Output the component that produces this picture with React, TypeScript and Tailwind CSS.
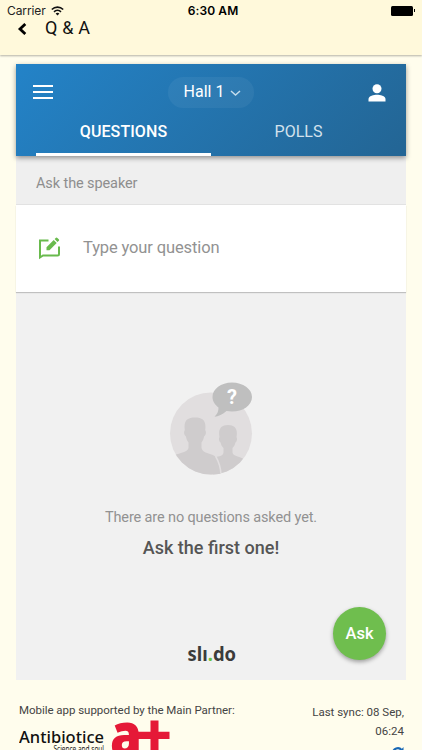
import { useState } from 'react';

const tabs = ['QUESTIONS', 'POLLS'];

const StatusBar = () => (
  <div className="flex h-[21px] items-center px-[7px] font-['Inter',sans-serif] text-[12px] leading-none text-black">
    <div className="flex flex-1 items-center gap-[5px] pt-px text-[#222]">
      <span className="tracking-[-0.1px]">Carrier</span>
      <svg width="13" height="10" viewBox="0 0 13 10" fill="none" stroke="#111" strokeWidth="1.6">
        <path d="M0.8 3.5C4 0.3 9 0.3 12.2 3.5" />
        <path d="M3 5.8C5 3.9 8 3.9 10 5.8" />
        <path d="M6.5 9.4 4.6 7.5Q6.5 6 8.4 7.5Z" fill="#111" stroke="none" />
      </svg>
    </div>
    <span className="mr-[-4px] pt-px font-semibold tracking-[0.1px]">6:30 AM</span>
    <div className="flex flex-1 items-center justify-end gap-px">
      <div className="h-[10px] w-[22px] rounded-[1.5px] bg-black" />
      <div className="h-[3px] w-px bg-black" />
    </div>
  </div>
);

const EmptyIcon = () => (
  <svg width="84" height="94" viewBox="0 0 84 94">
    <defs>
      <clipPath id="disc">
        <circle cx="42" cy="51.500" r="41" />
      </clipPath>
    </defs>
    <circle cx="42" cy="51.500" r="41" fill="#e1dedf" />
    <g clipPath="url(#disc)" fill="#cfcccd">
      <path d="M44 94V76C48 74 54 75 54.500 70.500V66C52.800 64.500 52 62.500 51.600 60.500C50 59.500 49.500 56.500 50.500 55C49 47 52 43 59 43C66 43 69 47 67.500 55C68.500 56.500 68 59.500 66.400 60.500C66 62.500 65.200 64.500 63.500 66V70.500C64 75 72 74 78 79V94Z" />
      <path d="M-1 94V77C7 70 18 72 19.500 66V60.500C18 58.500 17.200 56.500 17 54.500C15 53 14.500 50 15.800 48C14.500 39 18 35.500 26 35.500C34 35.500 37.500 39 36.200 48C37.500 50 37 53 35 54.500C34.800 56.500 34 58.500 32.500 60.500V66C34 72 43 71 47 75C50 81 51.500 87 51.500 94Z" />
      <path d="M46.500 74C50 80 52 86 52 94" fill="none" stroke="#e1dedf" strokeWidth="1.500" />
    </g>
    <path d="M63 0.500C74 0.500 83 7 83 15C83 23.500 74 29.500 63 29.500C61 29.500 59 29.300 57.500 29C54 32 49 34.500 45.500 34.700C48.500 32 49.500 29 49.500 25.500C46 23 43.500 19 43.500 15C43.500 7 52 0.500 63 0.500Z" fill="#bfbfbf" />
    <text x="63" y="21.500" textAnchor="middle" fill="#fff" fontFamily="Roboto, sans-serif" fontWeight="700" fontSize="20">?</text>
  </svg>
);

const PartnerLogo = () => (
  <svg width="152" height="34" viewBox="0 0 152 34" className="block">
    <text x="0" y="24.500" textLength="85" lengthAdjust="spacingAndGlyphs" fontFamily="Noto Sans, sans-serif" fontWeight="500" fontSize="17" fill="#111">Antibiotice</text>
    <text x="34.500" y="33.500" textLength="50.500" lengthAdjust="spacingAndGlyphs" fontFamily="Noto Sans, sans-serif" fontSize="8.500" fill="#222">Science and soul</text>
    <text x="91" y="37.500" textLength="32" lengthAdjust="spacingAndGlyphs" fontFamily="Open Sans, sans-serif" fontWeight="800" fontSize="61" fill="#e51937">a</text>
    <path d="M112 13.700H150.500V21H112ZM131.500 2.500H139.500V34H131.500Z" fill="#e51937" />
  </svg>
);

export default function App() {
  const [active, setActive] = useState('QUESTIONS');

  return (
    <div className="flex h-[750px] w-[422px] flex-col overflow-hidden bg-[#fffded] font-['Roboto',sans-serif]">
      <header className="h-[55px] shrink-0 bg-[#fff9db] shadow-[0_1px_2px_rgba(0,0,0,0.3)]">
        <StatusBar />
        <div className="flex h-[15px] items-center pl-[17px]">
          <svg width="10" height="12" viewBox="0 0 10 12" fill="none" stroke="#000" strokeWidth="2.8">
            <path d="M8.300 1 3 6l5.300 5" />
          </svg>
          <h1 className="mt-[-2px] ml-[18px] text-[18px] leading-none tracking-[0.2px] text-[#111]">Q &amp; A</h1>
        </div>
      </header>

      <main className="mx-[16px] mt-[9px] flex h-[616px] w-[390px] shrink-0 flex-col bg-[#f1f1f1]">
        <div className="z-10 h-[92px] shrink-0 bg-linear-135 from-[#2383c8] to-[#236594] shadow-[0_2px_5px_rgba(0,0,0,0.4)]">
          <div className="flex h-[56px] items-center justify-between pr-[20px] pl-[17px]">
            <button className="flex w-[20px] flex-col gap-[4px]">
              <span className="h-[2px] w-full bg-white" />
              <span className="h-[2px] w-full bg-white" />
              <span className="h-[2px] w-full bg-white" />
            </button>
            <button className="flex h-[31px] w-[86px] items-center justify-center gap-[6px] rounded-full bg-white/5 pl-[4px] text-[16px] text-white">
              Hall 1
              <svg width="11" height="7" viewBox="0 0 11 7" fill="none" stroke="#c5ddec" strokeWidth="1.500" className="mt-[2px]">
                <path d="M1 1l4.500 4L10 1" />
              </svg>
            </button>
            <svg width="18" height="18" viewBox="0 0 18 18" fill="#fff" className="mt-px">
              <circle cx="9" cy="4.700" r="4.500" />
              <path d="M0.500 17.500V15C0.500 12 6 10.800 9 10.800S17.500 12 17.500 15V17.500Z" />
            </svg>
          </div>
          <nav className="flex h-[36px] px-[20px]">
            {tabs.map((tab) => (
              <button
                key={tab}
                onClick={() => setActive(tab)}
                className={`flex w-1/2 justify-center border-b-[3px] pt-[1px] text-[16px] leading-[22px] ${active === tab ? 'border-white font-medium tracking-[0.1px] text-white' : 'border-transparent text-[#d3e2ed]'}`}
              >
                {tab}
              </button>
            ))}
          </nav>
        </div>

        <div className="flex h-[49px] shrink-0 items-center border-b border-[#e2e2e2] bg-[#efefef] pt-[7px] pl-[20px] text-[14.5px] tracking-[-0.1px] text-[#8e8e8e]">
          Ask the speaker
        </div>
        <div className="flex h-[87px] shrink-0 items-center bg-white pl-[22px] text-[16.5px] text-[#929292] shadow-[0_1px_1px_rgba(0,0,0,0.2)]">
          <svg width="23" height="24" viewBox="0 0 23 24" fill="none" stroke="#69ba4d" strokeWidth="2">
            <path d="M10.500 3.500H2V20.500L5 18.500H19.500Q21 18.500 21 17V9.500" />
            <path d="M8.500 13.200V10.200L15.700 3l3 3-7.200 7.200ZM16.600 2.100l1.400-1.400q.7-.5 1.400.2l1.600 1.600q.4.700-.1 1.200L19.500 5Z" fill="#69ba4d" stroke="none" />
          </svg>
          <span className="ml-[22px] tracking-[-0.13px]">Type your question</span>
        </div>

        <div className="flex flex-1 flex-col items-center pt-[90px]">
          <EmptyIcon />
          <p className="mt-[32px] text-[14.5px] leading-[20px] tracking-[-0.13px] text-[#929292]">There are no questions asked yet.</p>
          <p className="mt-[9px] text-[18px] leading-[22px] font-medium text-[#555]">Ask the first one!</p>
          <div className="relative mt-[48px] flex w-full justify-center">
            <svg width="50" height="62" viewBox="0 0 50 62" className="mr-[-1px]">
              <text x="0.500" y="54" textLength="48.500" lengthAdjust="spacingAndGlyphs" fontFamily="Noto Sans, sans-serif" fontWeight="700" fontSize="19" fill="#3b3b3b">
                slı<tspan fill="#69c040">.</tspan>do
              </text>
            </svg>
            <button className="absolute top-0 right-[20px] h-[53px] w-[53px] rounded-full bg-[#6fbe4e] pt-[2px] text-[16.5px] font-medium text-white shadow-[0_2px_4px_rgba(0,0,0,0.35)]">
              Ask
            </button>
          </div>
        </div>
      </main>

      <footer className="flex shrink-0 justify-between pr-[18px] pl-[19px] text-[11.5px] text-[#444]">
        <div className="pt-[22px]">
          <p className="leading-[16px] tracking-[-0.04px]">Mobile app supported by the Main Partner:</p>
          <PartnerLogo />
        </div>
        <div className="flex flex-col items-end pt-[23px] leading-[19px]">
          <span>Last sync: 08 Sep,</span>
          <span>06:24</span>
          <svg width="12" height="12" viewBox="0 0 12 12" fill="none" stroke="#1767b5" strokeWidth="2.200" className="mt-[6px]">
            <path d="M1 6A4.800 4.800 0 0 1 9.500 3M11 6A4.800 4.800 0 0 1 2.500 9" />
            <path d="M11.500 0V5H7Z" fill="#1767b5" stroke="none" />
          </svg>
        </div>
      </footer>
    </div>
  );
}
